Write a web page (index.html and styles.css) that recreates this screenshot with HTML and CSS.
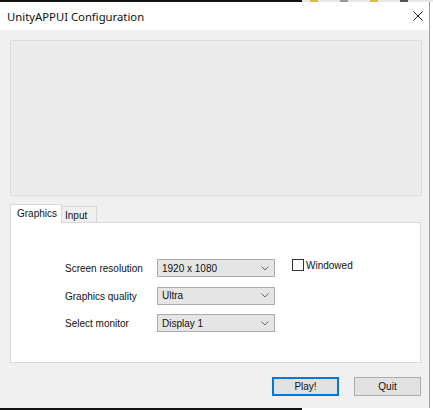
FILE: index.html
```html
<!DOCTYPE html>
<html>
<head>
<meta charset="utf-8">
<title>UnityAPPUI Configuration</title>
<link rel="stylesheet" href="styles.css">
</head>
<body>
<div class="screen">
  <div class="desk-top">
    <span class="desk-dark"></span>
    <span class="desk-icons">
      <span class="dot yellow"></span>
      <span class="dot grey"></span>
      <span class="dot yellow"></span>
      <span class="dot dark"></span>
    </span>
  </div>
  <div class="window">
    <div class="titlebar">
      <span class="title">UnityAPPUI Configuration</span>
      <svg class="close" width="10" height="10" viewBox="0 0 10 10">
        <path d="M0.5 0.5 L9.5 9.5 M9.5 0.5 L0.5 9.5" stroke="#222" stroke-width="1" fill="none"/>
      </svg>
    </div>
    <div class="client">
      <div class="banner"></div>
      <div class="tabs">
        <div class="tab active">Graphics</div>
        <div class="tab">Input</div>
      </div>
      <div class="tabpanel">
        <div class="form">
          <div class="label">Screen resolution</div>
          <div class="select"><span>1920 x 1080</span>
            <svg class="chev" width="8" height="5" viewBox="0 0 8 5"><path d="M0.5 0.5 L4 4 L7.5 0.5" stroke="#6a6a6a" stroke-width="1" fill="none"/></svg>
          </div>
          <div class="check"><span class="box"></span><span class="check-text">Windowed</span></div>

          <div class="label">Graphics quality</div>
          <div class="select"><span>Ultra</span>
            <svg class="chev" width="8" height="5" viewBox="0 0 8 5"><path d="M0.5 0.5 L4 4 L7.5 0.5" stroke="#6a6a6a" stroke-width="1" fill="none"/></svg>
          </div>
          <div></div>

          <div class="label">Select monitor</div>
          <div class="select"><span>Display 1</span>
            <svg class="chev" width="8" height="5" viewBox="0 0 8 5"><path d="M0.5 0.5 L4 4 L7.5 0.5" stroke="#6a6a6a" stroke-width="1" fill="none"/></svg>
          </div>
          <div></div>
        </div>
      </div>
      <div class="buttons">
        <button class="btn default">Play!</button>
        <button class="btn">Quit</button>
      </div>
    </div>
  </div>
  <div class="desk-bottom"><span class="desk-dark"></span></div>
</div>
</body>
</html>
```
FILE: styles.css
```css
html, body {
  margin: 0;
  padding: 0;
  background: #ffffff;
}

.screen {
  width: 433px;
  height: 410px;
  display: flex;
  flex-direction: column;
  background: #ffffff;
  overflow: hidden;
}

.desk-top {
  height: 2px;
  display: flex;
  background: #e8e8e8;
}

.desk-dark {
  width: 302px;
  height: 2px;
  background: #111111;
}

.desk-icons {
  display: flex;
  gap: 22px;
  padding-left: 8px;
}

.dot {
  width: 8px;
  height: 2px;
}
.dot.yellow { background: #e0b84a; }
.dot.grey { background: #9a9a9a; }
.dot.dark { background: #555555; }

.window {
  width: 429px;
  height: 406px;
  border-right: 1px solid #9c9c9c;
  display: flex;
  flex-direction: column;
}

.titlebar {
  height: 28px;
  background: #ffffff;
  display: flex;
  align-items: center;
  padding-left: 7px;
  padding-right: 6px;
}

.title {
  font-family: "Noto Sans", "Open Sans", sans-serif;
  font-size: 11.3px;
  color: #111111;
}

.close {
  margin-left: auto;
  display: block;
}

.client {
  flex: 1;
  background: #f0f0f0;
  padding: 10px 0 0 10px;
  display: flex;
  flex-direction: column;
  font-family: "Liberation Sans", Arial, sans-serif;
  font-size: 10px;
  color: #111111;
}

.banner {
  width: 412px;
  height: 156px;
  box-sizing: border-box;
  border: 1px solid #dcdcdc;
  background: #ececec;
}

.tabs {
  margin-top: 8px;
  height: 18px;
  display: flex;
  align-items: flex-end;
}

.tab {
  box-sizing: border-box;
  height: 16px;
  width: 35px;
  border: 1px solid #d9d9d9;
  border-bottom: none;
  border-left: none;
  background: #f0f0f0;
  padding-left: 3px;
  line-height: 17px;
}

.tab.active {
  position: relative;
  z-index: 1;
  width: 52px;
  height: 19px;
  margin-bottom: -1px;
  border-left: 1px solid #d9d9d9;
  background: #ffffff;
  padding-left: 6px;
  line-height: 18px;
}

.tabpanel {
  width: 411px;
  height: 141px;
  box-sizing: border-box;
  border: 1px solid #d9d9d9;
  background: #ffffff;
  padding: 36px 0 0 54px;
}

.form {
  display: grid;
  grid-template-columns: 92px 118px auto;
  grid-auto-rows: 18px;
  row-gap: 9.5px;
}

.label {
  display: flex;
  align-items: center;
  padding-top: 1px;
}

.select {
  box-sizing: border-box;
  height: 18px;
  border: 1px solid #acacac;
  background: #e5e5e5;
  display: flex;
  align-items: center;
  padding-left: 4px;
  padding-right: 5px;
}

.chev {
  margin-left: auto;
  display: block;
}

.check {
  display: flex;
  align-items: flex-start;
  margin-left: 17px;
}

.box {
  width: 12px;
  height: 12px;
  box-sizing: border-box;
  border: 1px solid #333333;
  background: #ffffff;
  margin-right: 2px;
}

.check-text {
  line-height: 14px;
}

.buttons {
  margin-top: 14px;
  display: flex;
  justify-content: flex-end;
  gap: 15px;
  padding-right: 8px;
}

.btn {
  box-sizing: border-box;
  width: 67px;
  height: 19px;
  margin: 0;
  padding: 0;
  border: 1px solid #adadad;
  background: #e1e1e1;
  font-family: "Liberation Sans", Arial, sans-serif;
  font-size: 10px;
  color: #111111;
}

.btn.default {
  border: 2px solid #0078d7;
}

.desk-bottom {
  height: 2px;
  display: flex;
  background: #ffffff;
}
```
